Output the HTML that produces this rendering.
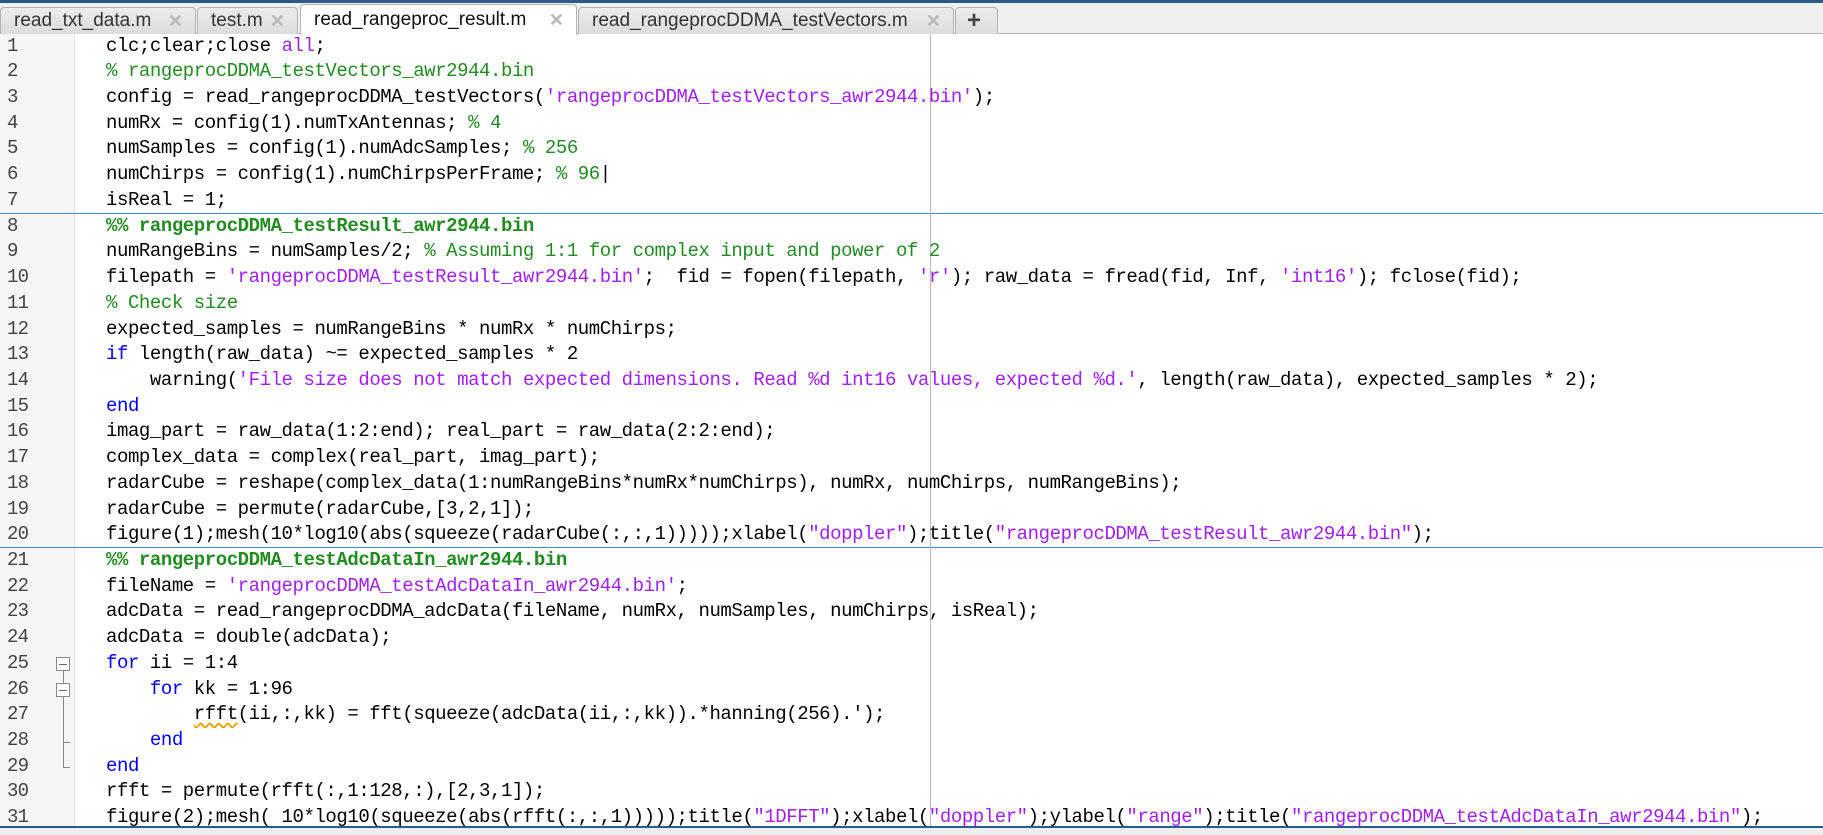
<!DOCTYPE html>
<html><head><meta charset="utf-8"><style>
*{margin:0;padding:0;box-sizing:border-box}
body{width:1823px;height:835px;overflow:hidden;background:#fff;position:relative;font-family:"Liberation Sans",sans-serif}
#topbar{position:absolute;left:0;top:0;width:1823px;height:3px;background:#2c5a8c}
#tabbar{position:absolute;left:0;top:3px;width:1823px;height:31px;background:#f0f0f0;border-bottom:1px solid #b8b8b8}
.tab{position:absolute;top:4px;height:27px;background:linear-gradient(#ececec,#dcdcdc);border:1px solid #b4b4b4;border-bottom:none;border-radius:4px 4px 0 0;font-size:19px;color:#333;line-height:26px;padding-left:13px;white-space:nowrap}
.tab.act{background:#fff;top:1px;height:31px;line-height:30px;color:#111}
.x{position:absolute;right:12px;color:#b8b8b8;font-size:18px;font-weight:bold}
#gutter{position:absolute;left:0;top:34px;width:75px;height:793px;background:#f6f6f6;border-right:1px solid #e4e4e4}
#nums{position:absolute;left:7px;top:33.6px;font-family:"Liberation Mono",monospace;font-size:19px;letter-spacing:-0.8px;line-height:25.72px;color:#444}
#code{position:absolute;left:106px;top:33.6px;font-family:"Liberation Mono",monospace;font-size:19px;letter-spacing:-0.43px;line-height:25.72px;color:#000;white-space:pre}
.k{color:#0000ff}.s{color:#a020f0}.c{color:#228b22}.b{color:#228b22;font-weight:bold}
.sep{position:absolute;left:0;width:1823px;height:1px;background:#3a8ee0}
#vline{position:absolute;left:930px;top:34px;width:1px;height:793px;background:#bdbdbd}
#bottom{position:absolute;left:0;top:826px;width:1823px;height:2px;background:#2c5a8c}
#bot2{position:absolute;left:0;top:828px;width:1823px;height:7px;background:#eeeeee}
.fold{position:absolute;left:56px;width:14px;height:14px;border:1px solid #888;background:#fff}
.fold:after{content:"";position:absolute;left:2px;top:6px;width:8px;height:1px;background:#666}
.fl{position:absolute;left:63px;width:1px;background:#888}
.sq{text-decoration:underline wavy #e8a000;text-underline-offset:3px}
</style></head><body>
<div id="topbar"></div>
<div id="tabbar">
<div class="tab" style="left:0;width:196px">read_txt_data.m<span class="x">✕</span></div>
<div class="tab" style="left:197px;width:101px">test.m<span class="x">✕</span></div>
<div class="tab act" style="left:300px;width:277px">read_rangeproc_result.m<span class="x">✕</span></div>
<div class="tab" style="left:578px;width:376px">read_rangeprocDDMA_testVectors.m<span class="x">✕</span></div>
<div class="tab" style="left:955px;width:43px;padding-left:11px;font-size:24px;font-weight:bold;color:#444">+</div>
</div>
<div id="gutter"></div>
<div id="nums">1<br>2<br>3<br>4<br>5<br>6<br>7<br>8<br>9<br>10<br>11<br>12<br>13<br>14<br>15<br>16<br>17<br>18<br>19<br>20<br>21<br>22<br>23<br>24<br>25<br>26<br>27<br>28<br>29<br>30<br>31</div>
<div class="fold" style="top:657px"></div>
<div class="fold" style="top:683px"></div>
<div class="fl" style="top:671px;height:12px"></div>
<div class="fl" style="top:697px;height:71px"></div>
<div style="position:absolute;left:63px;top:742px;width:7px;height:1px;background:#888"></div>
<div style="position:absolute;left:63px;top:767px;width:7px;height:1px;background:#888"></div>
<div class="sep" style="top:213px"></div>
<div class="sep" style="top:547px"></div>
<div id="vline"></div>
<div id="code">clc;clear;close <span class="s">all</span>;
<span class="c">% rangeprocDDMA_testVectors_awr2944.bin</span>
config = read_rangeprocDDMA_testVectors(<span class="s">'rangeprocDDMA_testVectors_awr2944.bin'</span>);
numRx = config(1).numTxAntennas; <span class="c">% 4</span>
numSamples = config(1).numAdcSamples; <span class="c">% 256</span>
numChirps = config(1).numChirpsPerFrame; <span class="c">% 96</span>|
isReal = 1;
<span class="b">%% rangeprocDDMA_testResult_awr2944.bin</span>
numRangeBins = numSamples/2; <span class="c">% Assuming 1:1 for complex input and power of 2</span>
filepath = <span class="s">'rangeprocDDMA_testResult_awr2944.bin'</span>;  fid = fopen(filepath, <span class="s">'r'</span>); raw_data = fread(fid, Inf, <span class="s">'int16'</span>); fclose(fid);
<span class="c">% Check size</span>
expected_samples = numRangeBins * numRx * numChirps;
<span class="k">if</span> length(raw_data) ~= expected_samples * 2
    warning(<span class="s">'File size does not match expected dimensions. Read %d int16 values, expected %d.'</span>, length(raw_data), expected_samples * 2);
<span class="k">end</span>
imag_part = raw_data(1:2:end); real_part = raw_data(2:2:end);
complex_data = complex(real_part, imag_part);
radarCube = reshape(complex_data(1:numRangeBins*numRx*numChirps), numRx, numChirps, numRangeBins);
radarCube = permute(radarCube,[3,2,1]);
figure(1);mesh(10*log10(abs(squeeze(radarCube(:,:,1)))));xlabel(<span class="s">"doppler"</span>);title(<span class="s">"rangeprocDDMA_testResult_awr2944.bin"</span>);
<span class="b">%% rangeprocDDMA_testAdcDataIn_awr2944.bin</span>
fileName = <span class="s">'rangeprocDDMA_testAdcDataIn_awr2944.bin'</span>;
adcData = read_rangeprocDDMA_adcData(fileName, numRx, numSamples, numChirps, isReal);
adcData = double(adcData);
<span class="k">for</span> ii = 1:4
    <span class="k">for</span> kk = 1:96
        <span class="sq">rfft</span>(ii,:,kk) = fft(squeeze(adcData(ii,:,kk)).*hanning(256).');
    <span class="k">end</span>
<span class="k">end</span>
rfft = permute(rfft(:,1:128,:),[2,3,1]);
figure(2);mesh( 10*log10(squeeze(abs(rfft(:,:,1)))));title(<span class="s">"1DFFT"</span>);xlabel(<span class="s">"doppler"</span>);ylabel(<span class="s">"range"</span>);title(<span class="s">"rangeprocDDMA_testAdcDataIn_awr2944.bin"</span>);</div>
<div id="bottom"></div>
<div id="bot2"></div>
</body></html>
